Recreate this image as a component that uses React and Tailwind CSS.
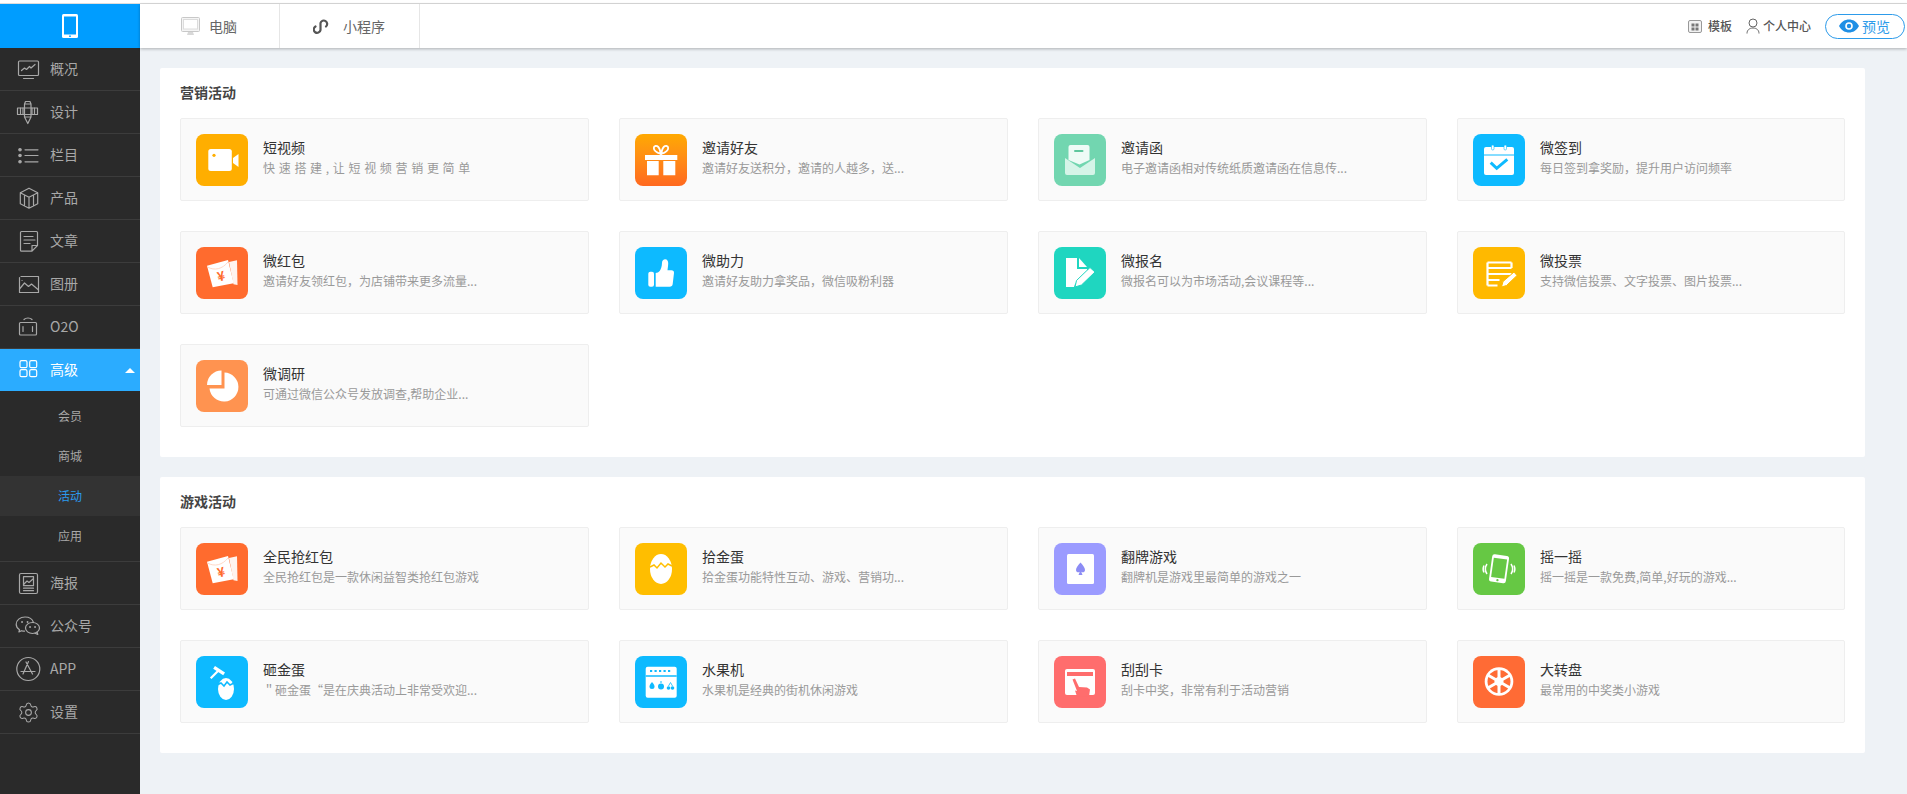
import React from 'react';
import { Settings } from 'lucide-react';

const line = { fill: 'none', stroke: 'currentColor', strokeWidth: 1.2, strokeLinecap: 'round', strokeLinejoin: 'round' };

// Sidebar line icons, all drawn in a 26x26 box
function NavIcon({ name }) {
  if (name === 'settings') return <div className="w-[26px] h-[26px] flex items-center justify-center"><Settings size={23} strokeWidth={1.1} /></div>;
  return (
    <svg width="26" height="26" viewBox="0 0 26 26" {...line}>
      {name === 'overview' && (
        <>
          <rect x="3.5" y="5" width="20" height="14.5" rx="1" />
          <path d="M8.5 22.5h10M6.5 14.5l3-2.5 2 1.5 3-3 1.5 1.5 4-3.5" />
        </>
      )}
      {name === 'design' && (
        <>
          <rect x="2.5" y="9" width="20" height="6.5" />
          <path d="M5.5 9v6.5M8 9v6.5M17 9v6.5M19.5 9v6.5" />
          <path d="M9.5 5h6.5v13l-3.2 6.5L9.5 18zM9.5 5l1-2.5h4.5l1 2.5M9.5 18h6.5" />
        </>
      )}
      {name === 'column' && (
        <>
          <circle cx="5" cy="7.8" r="1.2" fill="currentColor" />
          <circle cx="5" cy="13.5" r="1.2" fill="currentColor" />
          <circle cx="5" cy="19.8" r="1.2" fill="currentColor" />
          <path d="M10 7.8h13M10 13.5h13M10 19.8h13" />
        </>
      )}
      {name === 'product' && <path d="M14 3.2l8.7 4.5v11l-8.7 4.5-8.7-4.5v-11zM5.3 7.7l8.7 4.5 8.7-4.5M14 12.2v11M9.5 10v11M18.5 10v11" />}
      {name === 'article' && <path d="M6.5 3.5h15a1 1 0 0 1 1 1v13l-5.5 5.7H6.5a1 1 0 0 1-1-1V4.5a1 1 0 0 1 1-1zM9 8.5h9M9 12h11M9 15.5h6M17 23v-5.5h5.5" />}
      {name === 'album' && (
        <>
          <path d="M6 5.5h17.5v16H4.5v-15" />
          <path d="M4.5 18l5-6 4 3.5 3-2.500 6.500 5.500M7 9.500h.1" />
        </>
      )}
      {name === 'o2o' && (
        <>
          <rect x="4.5" y="8.5" width="17" height="12.5" rx="1" />
          <path d="M8 12.5v5M17.5 12.5v5M9 5.5c2-2 6-2 8 0" />
        </>
      )}
      {name === 'advanced' && (
        <>
          <rect x="5" y="3.7" width="7" height="7" rx="1.5" />
          <rect x="14.7" y="3.7" width="7" height="7" rx="1.5" />
          <rect x="5" y="12.7" width="7" height="7" rx="1.5" />
          <rect x="14.7" y="12.7" width="7" height="7" rx="1.5" />
        </>
      )}
      {name === 'poster' && (
        <>
          <rect x="4.5" y="3.5" width="18" height="20" rx="1.5" />
          <rect x="8.5" y="6.7" width="10" height="9" />
          <path d="M8.5 18.2h10M8.5 20.7h10M9 14l3-3 2 1.5 4-3.5" />
        </>
      )}
      {name === 'wechat' && (
        <>
          <path d="M18.5 9.5C17.5 6.5 14.2 4 10 4 5 4 1.2 7.3 1.2 11.2c0 2.300 1.300 4.300 3.300 5.600l-.6 2.200 2.500-1.300c1 .3 2 .5 3.100.5" />
          <ellipse cx="17.5" cy="15" rx="7" ry="5.5" />
          <path d="M22 19l.8 2.5-2.800-1.300" />
          <path d="M7 9h.1M12.5 9h.1M15 14h.1M20 14h.1" strokeWidth="1.8" />
        </>
      )}
      {name === 'app' && (
        <>
          <circle cx="13.3" cy="13" r="11.5" />
          <path d="M13.5 5.5L8 18M11 6l6.5 12M6 15.5h14" />
        </>
      )}
    </svg>
  );
}

// Solid app tiles, drawn in a 52x52 box
function PacketIcon() {
  return (
    <svg width="52" height="52" viewBox="0 0 52 52">
      <path d="M33 15l8-1.800.5 24.800-4-.8z" fill="#fff" opacity="0.92" />
      <path d="M11 18.700L32 13l5.700 23.300-21 4z" fill="#fff" />
      <path d="M11.500 20c7 4 15 2 20.500-5" fill="none" stroke="#ffd9c8" strokeWidth="1" />
      <text x="25.300" y="34" fontSize="13" fontWeight="700" fill="#ff6b2e" textAnchor="middle" transform="rotate(-14 25.300 30)">¥</text>
    </svg>
  );
}

function EggIcon({ cx = 26, cy = 26, rx = 11, ry = 15, crack, stroke }) {
  return (
    <g>
      <ellipse cx={cx} cy={cy} rx={rx} ry={ry} fill="#fff" />
      <path d={crack} fill="none" stroke={stroke} strokeWidth="1.5" />
    </g>
  );
}

function AppIcon({ name }) {
  if (name === 'packet') return <PacketIcon />;
  return (
    <svg width="52" height="52" viewBox="0 0 52 52">
      {name === 'video' && (
        <>
          <rect x="12.3" y="15" width="23.5" height="22" rx="2.5" fill="#fff" />
          <path d="M37 24l5.500-4v13l-5.500-4z" fill="#fff" />
          <circle cx="18" cy="21.3" r="1.6" fill="#ffae00" />
        </>
      )}
      {name === 'gift' && (
        <>
          <rect x="10" y="21" width="32.3" height="5" fill="#fff" />
          <path d="M12 27h11.700v14.300H12zM28.300 27h12v14.300h-12z" fill="#fff" />
          <path d="M25.800 20c-3-1-7-3-7-6 0-2.500 3-2.500 4.500-1 1.200 1.200 2 4 2.500 7zm.4 0c3-1 7-3 7-6 0-2.500-3-2.500-4.500-1-1.200 1.200-2 4-2.500 7z" fill="none" stroke="#fff" strokeWidth="1.8" />
        </>
      )}
      {name === 'invite' && (
        <>
          <path d="M11 24l15 10 15-10v15a2 2 0 0 1-2 2H13a2 2 0 0 1-2-2z" fill="#d5f4e8" />
          <path d="M14.500 13a2 2 0 0 1 2-2h17a2 2 0 0 1 2 2v13l-10 4.500-11-4.500z" fill="#eefbf6" />
          <rect x="20" y="16" width="9.5" height="2" rx="1" fill="#5fc79e" />
        </>
      )}
      {name === 'calendar' && (
        <>
          <rect x="11" y="13" width="30" height="28" rx="2" fill="#fff" />
          <path d="M11 21h30" stroke="#0dbaff" strokeWidth="1" />
          <rect x="18.5" y="11" width="2.5" height="5" rx="1.2" fill="#fff" stroke="#0dbaff" strokeWidth="0.6" />
          <rect x="31" y="11" width="2.5" height="5" rx="1.2" fill="#fff" stroke="#0dbaff" strokeWidth="0.6" />
          <path d="M17.700 28.700l6 5.600 10.600-9" fill="none" stroke="#0dbaff" strokeWidth="3" />
        </>
      )}
      {name === 'thumb' && (
        <>
          <rect x="13.3" y="24.7" width="5.7" height="15" rx="2" fill="#fff" />
          <path d="M20.700 26c3 0 6-3 6.300-10 0-2.500 1.500-3.700 3.200-3.700 2 0 3 1.700 3 4 0 2.500-.5 5-.7 7h4c1.600 0 2.700 1 2.500 2.700l-1.300 11c-.2 1.700-1.300 2.700-3 2.700H20.700z" fill="#fff" />
        </>
      )}
      {name === 'signup' && (
        <>
          <path d="M12 11h11v11h10v3L21 37l-1 3h-8z" fill="#fff" />
          <path d="M25 11l8 9h-8z" fill="#fff" />
          <path d="M21 40l1.500-6.500L36 20.500l5 4.500-13.500 13z" fill="#fff" stroke="#1fd6c0" strokeWidth="1" />
        </>
      )}
      {name === 'vote' && (
        <>
          <path d="M14.500 15.500h24M14.500 21h24M14.500 27h24M14.500 33h12M14.500 38.500h10M14.500 15.500v23M38.500 15.500V21" fill="none" stroke="#fff" strokeWidth="2.2" />
          <path d="M28.500 40l1.500-5.500L41 25l3 3.500-10.500 10z" fill="#fff" stroke="#ffb900" strokeWidth="1" />
        </>
      )}
      {name === 'pie' && (
        <>
          <path d="M28.500 12.500a14.500 14.500 0 1 1-15 16h15z" fill="#fff" />
          <path d="M25.500 10.500v14.500H11a14.500 14.500 0 0 1 14.500-14.500z" fill="#fff" />
        </>
      )}
      {name === 'goldegg' && <EggIcon crack="M15 24l4-2 3 3 4-5 4 4 3-3 4 2" stroke="#ffbe00" />}
      {name === 'flip' && (
        <>
          <rect x="13" y="11" width="27" height="30" rx="1.5" fill="#fff" />
          <path d="M26.500 19.500c-2.500 3-4.500 5-4.500 7.500 0 2 2.200 3 3.800 1.800l-1.300 3.200h4l-1.300-3.200c1.600 1.200 3.800.2 3.800-1.800 0-2.500-2-4.500-4.500-7.500z" fill="#8c8cf5" />
        </>
      )}
      {name === 'shake' && (
        <>
          <g transform="rotate(8 26 26)">
            <rect x="17.5" y="12" width="17" height="27.5" rx="2.5" fill="#fff" />
            <rect x="19.3" y="15.5" width="13.4" height="19.5" fill="#66c844" />
            <circle cx="26" cy="37.2" r="1.2" fill="#66c844" />
          </g>
          <path d="M14 21c-2 3-2 7 0 10M11 22.500c-1 2-1 5 0 7M38 21c2 3 2 7 0 10M41 22.500c1 2 1 5 0 7" fill="none" stroke="#fff" strokeWidth="1.5" />
        </>
      )}
      {name === 'hammer' && (
        <>
          <path d="M19 10l10 6.500-1.800 2.700-10-6.500z" fill="#fff" />
          <path d="M14.700 22.300l8-8" stroke="#fff" strokeWidth="2.2" />
          <EggIcon cx={30} cy={33} rx={8} ry={11} crack="M21 29l4-2 3 3 3-4 3 3 4-2" stroke="#0dbaff" />
        </>
      )}
      {name === 'fruit' && (
        <>
          <rect x="10.7" y="10.7" width="31" height="31" rx="2" fill="#fff" />
          <path d="M10.700 20h31" stroke="#0dbaff" strokeWidth="1.5" />
          <path d="M15 15h22" stroke="#0dbaff" strokeWidth="2" strokeDasharray="2.2 2.3" />
          <path d="M17 26c-2 2.500-2.500 3.500-2.500 4.500a2.500 2.500 0 0 0 5 0c0-1-.5-2-2.500-4.500z" fill="#0dbaff" />
          <circle cx="26" cy="30.5" r="3" fill="#0dbaff" />
          <path d="M26 27v-2" stroke="#0dbaff" strokeWidth="1" />
          <circle cx="33.5" cy="32" r="1.8" fill="#0dbaff" />
          <circle cx="37.5" cy="32" r="1.8" fill="#0dbaff" />
          <path d="M33.500 30l2-3.500 2 3.500" fill="none" stroke="#0dbaff" strokeWidth="0.8" />
        </>
      )}
      {name === 'scratch' && (
        <>
          <rect x="11" y="13" width="30" height="26" rx="2" fill="#fff" />
          <rect x="13" y="16" width="26" height="4" fill="#ff6d6d" />
          <path d="M18.500 23.500l2.500-1 4 8.500 8 .5 3 2-1 7H23l-2-6 2 .5z" fill="#ff6d6d" />
        </>
      )}
      {name === 'wheel' && (
        <>
          <circle cx="26" cy="25.5" r="14.3" fill="#fff" />
          <circle cx="26" cy="25.5" r="11.500" fill="#ff6b35" />
          <path d="M26 25.500V13M26 25.500V38M26 25.500L15.200 19.200M26 25.500l10.800 6.300M26 25.500L15.200 31.800M26 25.500l10.800-6.300" stroke="#fff" strokeWidth="3" />
          <circle cx="26" cy="25.5" r="4.5" fill="#fff" />
        </>
      )}
    </svg>
  );
}

const navTop = [
  { icon: 'overview', label: '概况' },
  { icon: 'design', label: '设计' },
  { icon: 'column', label: '栏目' },
  { icon: 'product', label: '产品' },
  { icon: 'article', label: '文章' },
  { icon: 'album', label: '图册' },
  { icon: 'o2o', label: 'O2O' },
];

const navBottom = [
  { icon: 'poster', label: '海报' },
  { icon: 'wechat', label: '公众号' },
  { icon: 'app', label: 'APP' },
  { icon: 'settings', label: '设置' },
];

const subNav = ['会员', '商城', '活动', '应用'];

const marketing = [
  { icon: 'video', bg: 'bg-[#ffae00]', title: '短视频', desc: '快 速 搭 建 , 让 短 视 频 营 销 更 简 单', spaced: true },
  { icon: 'gift', bg: 'bg-linear-to-b from-[#ffa900] to-[#ff681f]', title: '邀请好友', desc: '邀请好友送积分，邀请的人越多，送...' },
  { icon: 'invite', bg: 'bg-[#72d6b0]', title: '邀请函', desc: '电子邀请函相对传统纸质邀请函在信息传...' },
  { icon: 'calendar', bg: 'bg-[#0dbaff]', title: '微签到', desc: '每日签到拿奖励，提升用户访问频率' },
  { icon: 'packet', bg: 'bg-[#ff6b2e]', title: '微红包', desc: '邀请好友领红包，为店铺带来更多流量...' },
  { icon: 'thumb', bg: 'bg-[#0dbaff]', title: '微助力', desc: '邀请好友助力拿奖品，微信吸粉利器' },
  { icon: 'signup', bg: 'bg-[#1fd6c0]', title: '微报名', desc: '微报名可以为市场活动,会议课程等...' },
  { icon: 'vote', bg: 'bg-[#ffb900]', title: '微投票', desc: '支持微信投票、文字投票、图片投票...' },
  { icon: 'pie', bg: 'bg-[#ff9350]', title: '微调研', desc: '可通过微信公众号发放调查,帮助企业...' },
];

const games = [
  { icon: 'packet', bg: 'bg-[#ff6b2e]', title: '全民抢红包', desc: '全民抢红包是一款休闲益智类抢红包游戏' },
  { icon: 'goldegg', bg: 'bg-[#ffbe00]', title: '拾金蛋', desc: '拾金蛋功能特性互动、游戏、营销功...' },
  { icon: 'flip', bg: 'bg-[#9b9bff]', title: '翻牌游戏', desc: '翻牌机是游戏里最简单的游戏之一' },
  { icon: 'shake', bg: 'bg-[#66c844]', title: '摇一摇', desc: '摇一摇是一款免费,简单,好玩的游戏...' },
  { icon: 'hammer', bg: 'bg-[#0dbaff]', title: '砸金蛋', desc: '＂砸金蛋“是在庆典活动上非常受欢迎...' },
  { icon: 'fruit', bg: 'bg-[#0dbaff]', title: '水果机', desc: '水果机是经典的街机休闲游戏' },
  { icon: 'scratch', bg: 'bg-[#ff6d6d]', title: '刮刮卡', desc: '刮卡中奖，非常有利于活动营销' },
  { icon: 'wheel', bg: 'bg-[#ff6b35]', title: '大转盘', desc: '最常用的中奖类小游戏' },
];

function NavRow({ icon, label }) {
  return (
    <div className="h-[43px] flex items-center pl-[15px] gap-[9px] border-b border-[#3c3c3c] text-[#a8a8a8] text-sm">
      <NavIcon name={icon} />
      <span className="pb-0.5">{label}</span>
    </div>
  );
}

function Sidebar() {
  return (
    <aside className="w-[140px] shrink-0 bg-[#2a2a2a] flex flex-col">
      <div className="h-[44px] bg-[#009dff] flex items-center justify-center">
        <svg width="16" height="24" viewBox="0 0 16 24">
          <rect x="0" y="0" width="16" height="24" rx="1.5" fill="#fff" />
          <rect x="2" y="2.5" width="12" height="18" fill="#009dff" />
          <circle cx="8" cy="22.2" r="0.9" fill="#009dff" />
        </svg>
      </div>
      {navTop.map((item) => (
        <NavRow key={item.label} {...item} />
      ))}
      <div className="h-[42px] bg-[#2bacff] flex items-center pl-[15px] gap-[9px] text-white text-sm relative">
        <NavIcon name="advanced" />
        <span className="pb-0.5">高级</span>
        <div className="absolute right-[5px] top-[19px] w-0 h-0 border-x-[5px] border-x-transparent border-b-[5px] border-b-white" />
      </div>
      <div className="py-[5px] border-b border-[#3c3c3c]">
        {subNav.map((label) => (
          <div
            key={label}
            className={`h-10 flex items-center justify-center text-xs ${
              label === '活动' ? 'bg-[#333333] text-[#2b9bef]' : 'text-[#a8a8a8]'
            }`}
          >
            {label}
          </div>
        ))}
      </div>
      {navBottom.map((item) => (
        <NavRow key={item.label} {...item} />
      ))}
    </aside>
  );
}

function Header() {
  return (
    <header className="relative z-10 h-[44px] shrink-0 bg-white flex items-center shadow-[0_1px_3px_rgba(0,0,0,0.28)]">
      <div className="w-[140px] h-full flex items-center pl-[41px] gap-[9px] border-r border-[#e6e6e6] text-sm text-[#666]">
        <svg width="19" height="19" viewBox="0 0 19 19">
          <rect x="0.5" y="0.5" width="18" height="14" rx="1" fill="#f4f4f4" stroke="#c8c8c8" />
          <rect x="2.5" y="2.5" width="14" height="9.5" fill="#fff" stroke="#dcdcdc" />
          <path d="M6 18h7l-1-3H7z" fill="#d8d8d8" />
        </svg>
        <span>电脑</span>
      </div>
      <div className="w-[140px] h-full flex items-center pl-[33px] gap-[13px] border-r border-[#e6e6e6] text-sm text-[#666]">
        <svg width="17" height="17" viewBox="0 0 17 17" fill="none" stroke="#555" strokeWidth="2.2" strokeLinecap="round">
          <path d="M2.500 8.500A3.400 3.400 0 1 0 7.500 12V5A3.400 3.400 0 1 1 13 8.500" />
        </svg>
        <span>小程序</span>
      </div>
      <div className="ml-auto flex items-center pr-[2px] text-xs font-medium text-[#555]">
        <svg width="14" height="14" viewBox="0 0 14 14" className="mr-[6px]">
          <rect x="0.5" y="1.5" width="13" height="12" rx="1.5" fill="#f2f2f2" stroke="#999" />
          <path d="M3.500 4.500h3v3h-3zM7.500 4.500h3v3h-3zM3.500 8.500h3v3h-3zM7.500 8.500h3v3h-3z" fill="#777" />
        </svg>
        <span>模板</span>
        <svg width="14" height="16" viewBox="0 0 14 16" fill="none" stroke="#666" strokeWidth="1" className="ml-[14px] mr-[3px]">
          <circle cx="7" cy="5" r="4" />
          <path d="M1 15.500c0-3.500 2.500-5.500 6-5.500s6 2 6 5.500" />
        </svg>
        <span>个人中心</span>
        <div className="ml-[14px] w-[80px] h-[25px] rounded-full border border-[#2d9bea] flex items-center pl-[13px] gap-[3px] text-sm font-normal text-[#2d9bea]">
          <svg width="20" height="14" viewBox="0 0 20 14">
            <path d="M0 7c2.500-4.500 6-6.500 10-6.500S17.500 2.500 20 7c-2.500 4.500-6 6.500-10 6.500S2.500 11.500 0 7z" fill="#1f8fe5" />
            <circle cx="10" cy="7" r="3.8" fill="#fff" />
            <circle cx="10" cy="7" r="2.2" fill="#1f8fe5" />
          </svg>
          <span>预览</span>
        </div>
      </div>
    </header>
  );
}

function ActivityItem({ icon, bg, title, desc, spaced }) {
  return (
    <div className="h-[83px] bg-[#fafafa] border border-[#eeeeee] rounded-[2px] flex items-center pl-[15px]">
      <div className={`w-[52px] h-[52px] rounded-lg shrink-0 ${bg}`}>
        <AppIcon name={icon} />
      </div>
      <div className="ml-[15px] pb-[5px] min-w-0">
        <div className="text-sm leading-5 text-[#333]">{title}</div>
        <div className={`text-xs leading-[18px] mt-[2px] text-[#999] whitespace-nowrap ${spaced ? '[word-spacing:1px]' : ''}`}>{desc}</div>
      </div>
    </div>
  );
}

function Section({ title, items, className }) {
  return (
    <section className={`bg-white px-5 pb-[30px] rounded-[2px] ${className}`}>
      <h2 className="text-sm font-bold leading-5 text-[#444] pt-[14px] pb-4">{title}</h2>
      <div className="grid grid-cols-[409px_389px_389px_388px] gap-x-[30px] gap-y-[30px]">
        {items.map((item) => (
          <ActivityItem key={item.title} {...item} />
        ))}
      </div>
    </section>
  );
}

export default function App() {
  return (
    <div className="w-[1907px] h-[794px] overflow-hidden bg-[#eef2f6] flex flex-col font-['Noto_Sans_CJK_SC','Lato',sans-serif]">
      <div className="h-1 shrink-0 bg-white border-b border-[#dddddd]" />
      <div className="flex flex-1 min-h-0">
        <Sidebar />
        <main className="flex-1 min-w-0 flex flex-col">
          <Header />
          <div className="pt-5 pl-5 w-[1725px]">
            <Section title="营销活动" items={marketing} className="mb-5" />
            <Section title="游戏活动" items={games} />
          </div>
        </main>
      </div>
    </div>
  );
}
